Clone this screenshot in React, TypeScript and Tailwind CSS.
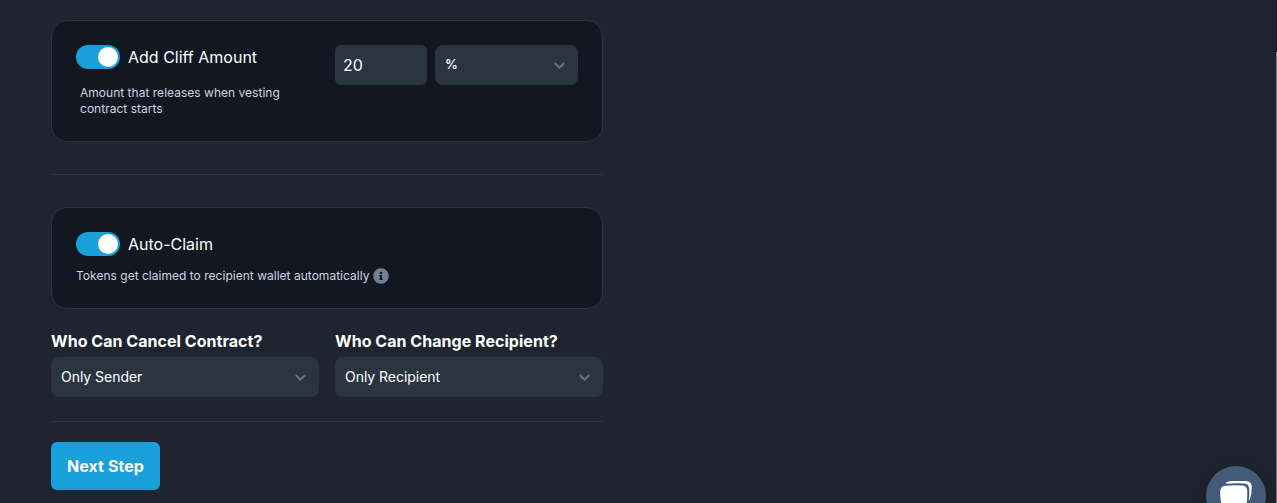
import React from "react";

function Toggle() {
  return (
    <button role="switch" aria-checked="true" className="flex h-6 w-11 shrink-0 items-center justify-end rounded-full bg-[#1aa1db] p-0.5">
      <span className="h-5 w-5 rounded-full bg-white" />
    </button>
  );
}

function Select({ value, className = "" }: { value: string; className?: string }) {
  return (
    <div className={`flex h-10 items-center justify-between rounded-lg bg-[#2b3541] pr-3 pl-2.5 text-white ${className}`}>
      <span>{value}</span>
      <svg width="13" height="13" viewBox="0 0 13 13" fill="none" stroke="#6b7784" strokeWidth="1.8">
        <path d="M1.8 4 6.500 8.700 11.200 4" />
      </svg>
    </div>
  );
}

function InfoIcon() {
  return (
    <svg width="16" height="16" viewBox="0 0 512 512" fill="#718096" className="shrink-0">
      <path d="M256 8C119 8 8 119.100 8 256c0 137 111 248 248 248s248-111 248-248C504 119.100 393 8 256 8zm0 110c23.200 0 42 18.800 42 42s-18.800 42-42 42-42-18.800-42-42 18.800-42 42-42zm56 254c0 6.600-5.400 12-12 12h-88c-6.600 0-12-5.400-12-12v-24c0-6.600 5.400-12 12-12h12v-64h-12c-6.600 0-12-5.400-12-12v-24c0-6.600 5.400-12 12-12h64c6.600 0 12 5.400 12 12v100h12c6.600 0 12 5.400 12 12v24z" />
    </svg>
  );
}

export default function App() {
  return (
    <div className="relative flex h-[503px] w-full justify-between overflow-hidden bg-[#1e2530] font-['Inter',sans-serif] text-white">
      <main className="ml-[51px] w-[552px] pt-5">
        <section className="flex h-[122px] rounded-2xl border border-[#2b3541] bg-[#131722] p-6">
          <div className="w-[259px]">
            <div className="flex items-center gap-2">
              <Toggle />
              <span className="text-base leading-6">Add Cliff Amount</span>
            </div>
            <p className="mt-4 ml-1 w-[210px] text-xs leading-4 tracking-[0.02px] text-[#cbd5e0]">
              Amount that releases when vesting contract starts
            </p>
          </div>
          <div className="flex gap-2">
            <input aria-label="Cliff amount" defaultValue="20" className="h-10 w-[92px] rounded-md bg-[#2b3541] px-2 text-base text-white outline-none" />
            <Select value="%" className="w-[143px] text-[13px] font-medium" />
          </div>
        </section>

        <hr className="my-8 border-t border-[#2b3541]" />

        <section className="h-[102px] rounded-2xl border border-[#2b3541] bg-[#131722] p-6">
          <div className="flex items-center gap-2">
            <Toggle />
            <span className="text-base leading-6">Auto-Claim</span>
          </div>
          <div className="mt-3 flex items-center gap-1 text-xs leading-4 tracking-[0.02px] text-[#cbd5e0]">
            <span>Tokens get claimed to recipient wallet automatically</span>
            <InfoIcon />
          </div>
        </section>

        <div className="mt-5 grid grid-cols-2 gap-4">
          <div>
            <div className="h-7 text-base leading-6 font-bold tracking-[0.04px]">Who Can Cancel Contract?</div>
            <Select value="Only Sender" className="text-sm tracking-[-0.03px]" />
          </div>
          <div>
            <div className="h-7 text-base leading-6 font-bold tracking-[0.04px]">Who Can Change Recipient?</div>
            <Select value="Only Recipient" className="text-sm tracking-[-0.03px]" />
          </div>
        </div>

        <hr className="mt-6 mb-5 border-t border-[#2b3541]" />

        <button className="h-12 w-[109px] rounded-md bg-[#1aa1db] text-base font-bold tracking-[0.08px]">Next Step</button>
      </main>

      <div className="flex w-px flex-col">
        <div className="h-[52px] bg-[#131722]" />
        <div className="grow bg-[#718096]" />
      </div>

      <button aria-label="Open chat" className="absolute top-[466px] left-[1206px] h-[60px] w-[60px] rounded-full bg-[#425b76] shadow-[0_1px_6px_rgba(0,0,0,0.06),0_2px_32px_rgba(0,0,0,0.16)]">
        <svg width="60" height="60" viewBox="0 0 60 60" fill="#fff">
          <path d="M20 16.600Q22 15.200 26 15H39.500Q45.500 15.200 45.800 21Q46 28 43.400 34.500H42.800Q43.600 28 43.200 22.500Q42.800 17.900 38.500 17.500Q30 16.900 20 17.800Z" />
          <path d="M19 19.800Q28 18.900 36.500 19.600Q41 20.200 41.200 24.500Q41.600 33 40 43H17Q13.600 34 14.300 24.500Q14.800 20.300 19 19.800Z" />
        </svg>
      </button>
    </div>
  );
}
